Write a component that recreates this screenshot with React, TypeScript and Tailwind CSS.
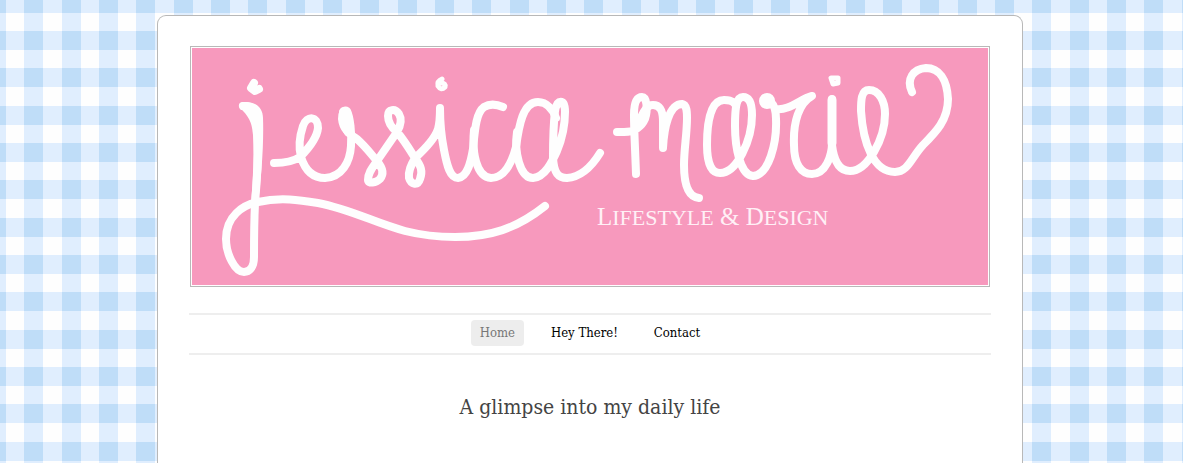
const stripes = [0, 38, 75];
const rows = [0, 37, 75];

function Gingham() {
  return (
    <svg className="absolute inset-0 -z-10 h-full w-full" aria-hidden="true">
      <defs>
        <pattern id="gingham" x="24" y="31" width="112" height="112" patternUnits="userSpaceOnUse">
          <rect width="112" height="112" fill="#fefefe" />
          {stripes.map((x) => (
            <rect key={x} x={x} width="19" height="112" fill="#e0eefe" />
          ))}
          {rows.map((y) => (
            <rect key={y} y={y} width="112" height="19" fill="#e0eefe" />
          ))}
          {stripes.map((x) =>
            rows.map((y) => <rect key={`${x}-${y}`} x={x} y={y} width="19" height="19" fill="#bfddf8" />),
          )}
        </pattern>
      </defs>
      <rect width="100%" height="100%" fill="url(#gingham)" />
    </svg>
  );
}

function Banner() {
  return (
    <svg viewBox="192 48 796 237" className="block w-full bg-[#f799bd]" role="img" aria-label="Jessica Marie">
      <g fill="none" stroke="#fefefe" strokeWidth="8" strokeLinecap="round" strokeLinejoin="round">
        {/* j with its long swash */}
        <path d="M243 106C253 105 258 112 258 124C259 150 257 180 255 203C254 225 254 240 254 257C254 268 249 272 244 272C235 272 226 254 226 239C226 216 243 205 258 202C280 197 300 200 318 203C350 209 375 223 405 231C425 236 440 237 455 237C490 237 516 229 545 206" />
        <path d="M239 107C238 103 242 102 246 102C256 102 263 108 263 118C264 145 261 180 258 204L251 204C253 180 254 160 253 135C252 119 246 114 239 107Z" fill="#fefefe" stroke="none" />
        <path d="M254 83L251 88L255 91L259 89" strokeWidth="8" />
        {/* e, s, s, i */}
        <path d="M274 163C286 163 294 161 300 157C308 149 317 138 318 128C318 116 307 115 303 126C300 135 298 146 301 157C305 170 313 178 325 178C342 177 350 162 351 146C352 133 350 117 347 111C344 109 342 113 342 119C343 130 350 134 357 139C366 147 371 154 377 161C383 168 384 174 380 179C376 183 368 184 368 180C368 173 372 168 377 161L397 132C401 125 402 119 399 114C395 108 388 109 388 116C388 123 392 128 397 132C404 140 410 150 415 158C421 166 423 171 420 179C418 186 411 185 409 178C408 171 411 165 415 158C425 149 435 138 438 129C440 122 440 115 440 108C440 123 441 135 444 150C447 166 450 178 458 178C468 177 471 161 473 149C475 129 476 113 484 107C489 104 496 104 503 107" />
        <path d="M344 112Q345 124 349 132" strokeWidth="10" />
        <path d="M442 79Q437 81 438 86Q441 91 445 87Q446 83 441 83" strokeWidth="5" />
        {/* c, a */}
        <path d="M474 130C472 152 476 177 491 178C505 178 512 162 516 147C519 125 523 102 538 102C547 102 553 110 556 118" />
        <path d="M517 132C514 152 520 178 533 178C545 177 552 162 557 151C562 139 565 128 565 112C565 98 557 99 555 111C553 128 553 143 553 158C554 173 558 178 567 178C582 177 592 166 600 153" />
        {/* m */}
        <path d="M617 132H624C635 132 642 126 645 119C648 110 647 97 642 97C636 97 634 105 634 115C634 130 635 145 636 174" />
        <path d="M638 126C642 112 647 105 653 105C661 105 663 112 663 122V148C664 128 669 104 682 104C687 105 687 112 687 118C687 134 684 149 684 165C684 184 688 197 699 198" />
        {/* a, r */}
        <path d="M735 104C732 100 728 100 724 100C711 100 707 121 707 145C707 164 712 173 720 173C737 173 752 140 752 115C752 102 749 97 743 97C736 97 735 109 735 126C735 147 740 175 753 176C769 175 777 143 776 119C776 111 775 106 771 102M776 109C789 111 800 99 812 96C799 103 793 122 794 145C794 164 801 174 812 174C826 174 832 155 832 143V99" />
        <circle cx="767" cy="101" r="4" fill="#fefefe" />
        {/* i, e and the heart curl */}
        <path d="M832 100V145C834 162 840 171 850 171C868 171 885 138 885 114C885 101 879 90 869 90C861 90 861 101 861 111C863 142 873 172 895 172C908 172 911 158 923 145C936 132 948 120 948 99C947 79 939 68 926 68C913 69 906 79 912 92" />
        <path d="M832 100V143" strokeWidth="9" />
        <path d="M831 78L838 78L838 83L833 84Z" strokeWidth="5" />
      </g>
      <text
        x="597"
        y="225"
        fill="#fff0f6"
        className="font-['Liberation_Serif',serif] text-[25px]"
      >
        L<tspan fontSize="22">IFESTYLE</tspan> &amp; D<tspan fontSize="22">ESIGN</tspan>
      </text>
    </svg>
  );
}

const links = ["Home", "Hey There!", "Contact"];

export default function App() {
  return (
    <div className="relative isolate flex min-h-screen justify-center overflow-hidden pt-[15px] pr-[3px] font-['DejaVu_Serif_Condensed','DejaVu_Serif',serif]">
      <Gingham />
      <div className="w-full max-w-[866px] rounded-t-[9px] border border-b-0 border-[#b8b8b8] bg-white px-[31px] pt-[30px]">
        <header>
          <a href="#home" className="mx-px block border border-[#b8b8b8] p-px">
            <Banner />
          </a>
          <nav className="mt-[26px] flex justify-center gap-[18px] border-y-2 border-[#eeeeee] pt-[5px] pb-[7px]">
            {links.map((label, index) => (
              <a
                key={label}
                href="#"
                aria-current={index === 0 ? "page" : undefined}
                className="rounded bg-white px-[9px] text-[13px] leading-[26px] text-black aria-[current=page]:bg-[#ededed] aria-[current=page]:text-[#777777]"
              >
                {label}
              </a>
            ))}
          </nav>
        </header>
        <main>
          <h1 className="mt-9 text-center text-[21px] leading-[32px] text-[#444444]">A glimpse into my daily life</h1>
        </main>
      </div>
    </div>
  );
}
